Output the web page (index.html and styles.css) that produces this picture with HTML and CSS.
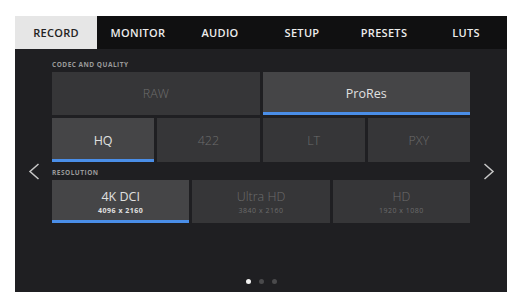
FILE: index.html
```html
<!DOCTYPE html>
<html lang="en">
<head>
    <meta charset="UTF-8">
    <title>Record Settings</title>
    <link rel="stylesheet" href="styles.css">
</head>
<body>
    <div class="screen">
        <nav class="tabs">
            <div class="tab active">RECORD</div>
            <div class="tab">MONITOR</div>
            <div class="tab">AUDIO</div>
            <div class="tab">SETUP</div>
            <div class="tab">PRESETS</div>
            <div class="tab">LUTS</div>
        </nav>

        <div class="content">
            <div class="arrow">
                <svg width="12" height="17" viewBox="0 0 12 17"><path d="M10.5 1 L2 8.5 L10.5 16" fill="none" stroke="#c8c8c8" stroke-width="1.5"/></svg>
            </div>

            <div class="main">
                <div class="section-label">CODEC AND QUALITY</div>
                <div class="row row-2">
                    <div class="option">RAW</div>
                    <div class="option selected">ProRes</div>
                </div>
                <div class="row row-4">
                    <div class="option selected">HQ</div>
                    <div class="option">422</div>
                    <div class="option">LT</div>
                    <div class="option">PXY</div>
                </div>

                <div class="section-label">RESOLUTION</div>
                <div class="row row-3">
                    <div class="option selected">
                        <span class="name">4K DCI</span>
                        <span class="size">4096 x 2160</span>
                    </div>
                    <div class="option">
                        <span class="name">Ultra HD</span>
                        <span class="size">3840 x 2160</span>
                    </div>
                    <div class="option">
                        <span class="name">HD</span>
                        <span class="size">1920 x 1080</span>
                    </div>
                </div>

                <div class="dots">
                    <span class="dot on"></span>
                    <span class="dot"></span>
                    <span class="dot"></span>
                </div>
            </div>

            <div class="arrow">
                <svg width="12" height="17" viewBox="0 0 12 17"><path d="M1.5 1 L10 8.5 L1.5 16" fill="none" stroke="#c8c8c8" stroke-width="1.5"/></svg>
            </div>
        </div>
    </div>
</body>
</html>
```

FILE: styles.css
```css
:root {
    --screen-bg: #1f1f22;
    --tab-bg: #101011;
    --option-bg: #363638;
    --option-selected: #454547;
    --blue: #4a8ee8;
}

body {
    margin: 0;
    background: #ffffff;
    font-family: 'Open Sans', 'Lato', sans-serif;
}

.screen {
    width: 492px;
    height: 276px;
    margin: 16px 0 0 15px;
    background: var(--screen-bg);
    display: flex;
    flex-direction: column;
}

.tabs {
    display: grid;
    grid-template-columns: repeat(6, 1fr);
    height: 33px;
    background: var(--tab-bg);
}

.tab {
    display: flex;
    align-items: center;
    justify-content: center;
    color: #ececec;
    font-size: 11px;
    font-weight: 600;
    letter-spacing: 0.3px;
}

.tab.active {
    background: #e6e6e6;
    color: #222;
}

.content {
    flex: 1;
    display: grid;
    grid-template-columns: 37px 418px 37px;
}

.arrow {
    display: flex;
    align-items: center;
    justify-content: center;
    padding-top: 2px;
}

.main {
    display: flex;
    flex-direction: column;
    padding-top: 11px;
}

.section-label {
    color: #9a9a9a;
    font-size: 6.5px;
    font-weight: 700;
    letter-spacing: 0.5px;
    line-height: 9px;
    margin-bottom: 3px;
}

.row {
    display: grid;
    gap: 3px;
    margin-bottom: 3px;
}

.row-2 {
    grid-template-columns: repeat(2, 1fr);
    height: 43px;
}

.row-4 {
    grid-template-columns: repeat(4, 1fr);
    height: 44px;
    margin-bottom: 6px;
}

.row-3 {
    grid-template-columns: repeat(3, 1fr);
    height: 43px;
}

.option {
    background: var(--option-bg);
    color: #6c6c6c;
    font-size: 12.5px;
    font-weight: 300;
    display: flex;
    flex-direction: column;
    align-items: center;
    justify-content: center;
    box-sizing: border-box;
}

.option.selected {
    background: var(--option-selected);
    color: #e0e0e0;
    font-weight: 400;
    border-bottom: 3px solid var(--blue);
    padding-top: 3px;
}

.option .name {
    font-size: 12.5px;
    line-height: 15px;
}

.option .size {
    font-size: 7px;
    font-weight: 400;
    letter-spacing: 0.5px;
    margin-top: 2px;
}

.option.selected .size {
    font-weight: 700;
}

.dots {
    margin-top: auto;
    margin-bottom: 8px;
    display: flex;
    justify-content: center;
    gap: 8px;
}

.dot {
    width: 5px;
    height: 5px;
    border-radius: 50%;
    background: #4a4a4c;
}

.dot.on {
    background: #f2f2f2;
}
```
